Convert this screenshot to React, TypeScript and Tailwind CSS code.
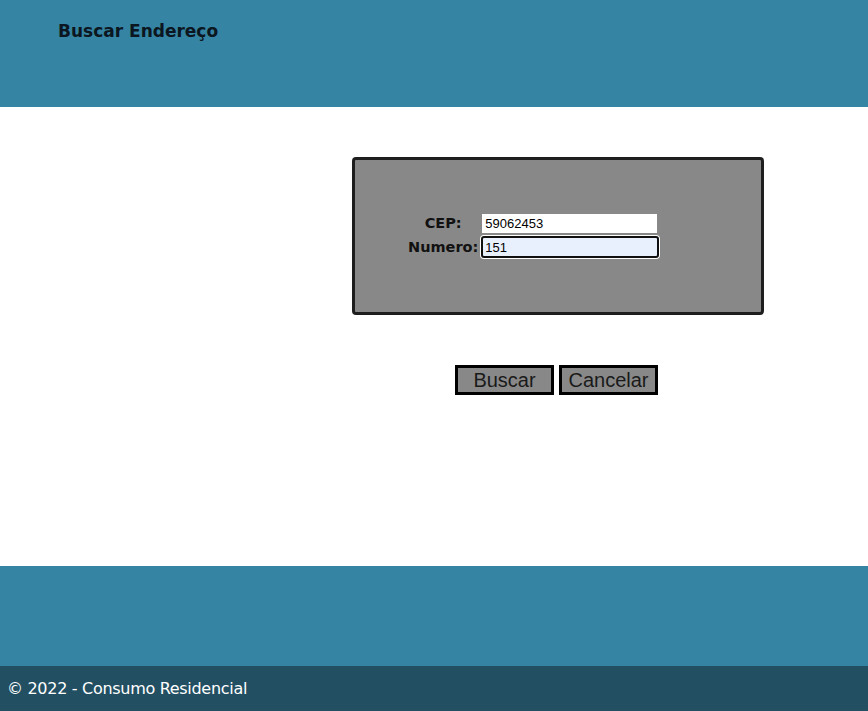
import React, { useState } from 'react';

const brandFont = { fontFamily: '"DejaVu Sans", "Noto Sans", sans-serif' };
const inputFont = { fontFamily: '"Liberation Sans", Arial, sans-serif' };

export default function App() {
  const [cep, setCep] = useState('59062453');
  const [numero, setNumero] = useState('151');

  return (
    <div className="flex min-h-[711px] w-full flex-col bg-white">
      <header className="h-[107px] bg-[#3584a3] pl-[58px] pt-[19px]">
        <h1 className="text-[17px] font-bold text-[#0b1620]" style={brandFont}>
          Buscar Endereço
        </h1>
      </header>

      <main className="h-[459px] pt-[50px]">
        <div className="ml-[352px] box-border h-[158px] w-[412px] rounded-[4px] border-[3px] border-[#1e1e1e] bg-[#888888] pl-[50px] pt-[51px]">
          <table className="border-separate border-spacing-x-[3px] border-spacing-y-[2px]">
            <tbody>
              <tr>
                <th className="p-0 text-center text-[14.5px] font-bold leading-none text-[#111]" style={brandFont}>
                  CEP:
                </th>
                <td className="p-0">
                  <input
                    value={cep}
                    onChange={(e) => setCep(e.target.value)}
                    className="block h-[21px] w-[177px] border border-[#888] bg-white px-[3px] text-[13px] text-black outline-none"
                    style={inputFont}
                  />
                </td>
              </tr>
              <tr>
                <th className="p-0 text-center text-[14.5px] font-bold leading-none text-[#111]" style={brandFont}>
                  Numero:
                </th>
                <td className="p-0">
                  <input
                    value={numero}
                    onChange={(e) => setNumero(e.target.value)}
                    className="block h-[22px] w-[178px] rounded-[3px] border-2 border-[#101010] bg-[#e8f0fe] px-[2px] text-[13px] text-black outline-none ring-1 ring-white"
                    style={inputFont}
                  />
                </td>
              </tr>
            </tbody>
          </table>
        </div>

        <div className="ml-[455px] mt-[50px] flex gap-[5px]">
          <button
            className="h-[30px] w-[99px] border-[3px] border-black bg-[#888888] text-[20px] leading-none text-[#1a1a1a]"
            style={inputFont}
          >
            Buscar
          </button>
          <button
            className="h-[30px] w-[99px] border-[3px] border-black bg-[#888888] text-[20px] leading-none text-[#1a1a1a]"
            style={inputFont}
          >
            Cancelar
          </button>
        </div>
      </main>

      <footer>
        <div className="h-[100px] bg-[#3584a3]" />
        <div className="flex h-[45px] items-center bg-[#234f63] pl-[7px]">
          <span className="text-[16px] tracking-[-0.3px] text-white" style={brandFont}>
            © 2022 - Consumo Residencial
          </span>
        </div>
      </footer>
    </div>
  );
}
